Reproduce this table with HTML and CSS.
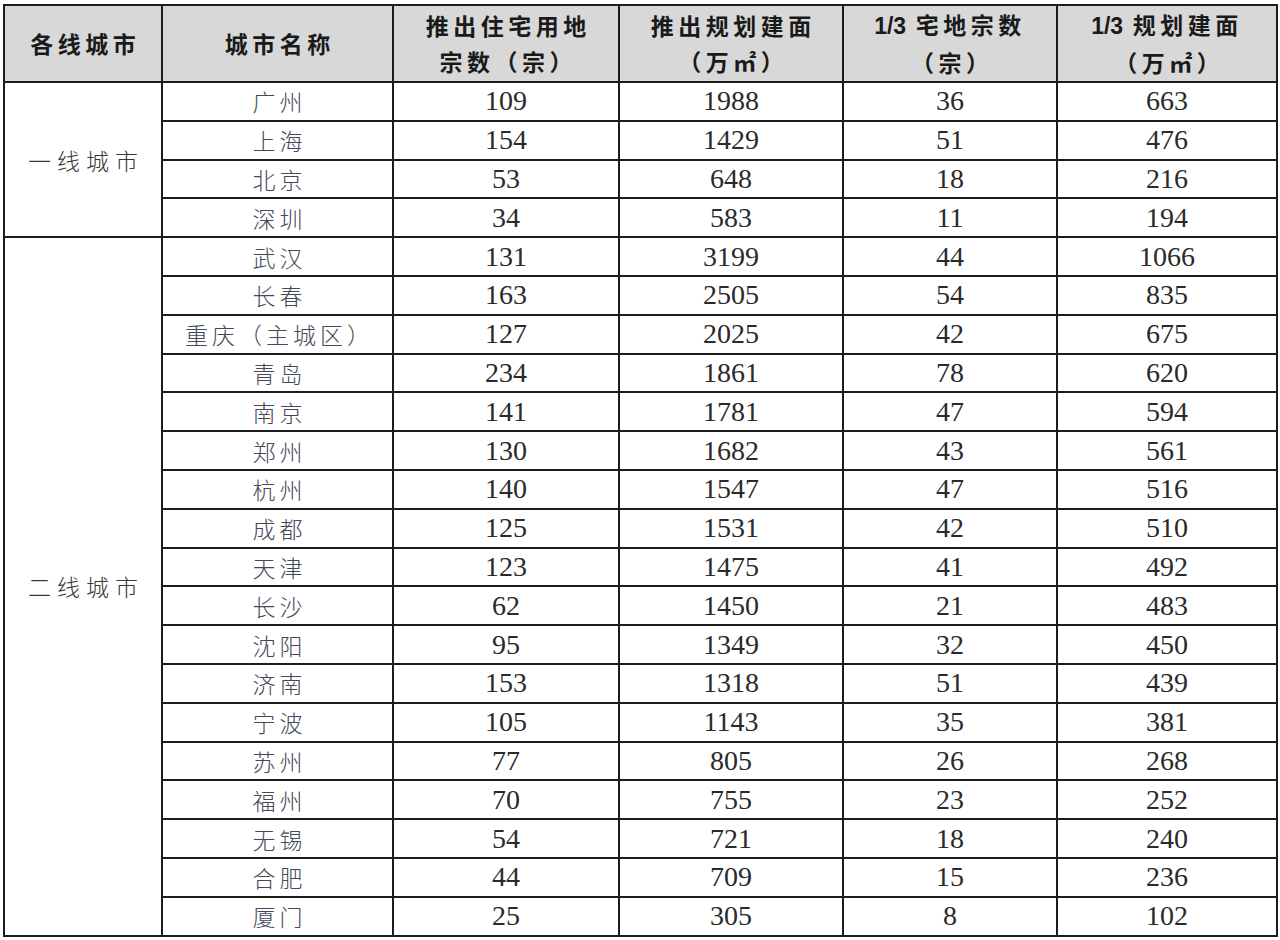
FILE: index.html
```html
<!DOCTYPE html>
<html lang="zh-CN">
<head>
<meta charset="utf-8">
<title>城市宅地推出统计</title>
<link rel="stylesheet" href="styles.css">
</head>
<body>
<table class="land">
<colgroup>
<col class="c1"><col class="c2"><col class="c3"><col class="c4"><col class="c5"><col class="c6">
</colgroup>
<thead>
<tr class="head">
<th><span class="hz">各线城市</span></th>
<th><span class="hz">城市名称</span></th>
<th><span class="hz">推出住宅用地</span><br><span class="hz">宗数（宗）</span></th>
<th><span class="hz">推出规划建面</span><br><span class="hz">（万㎡）</span></th>
<th><span class="num13">1/3</span> <span class="hz">宅地宗数</span><br><span class="hz">（宗）</span></th>
<th><span class="num13">1/3</span> <span class="hz">规划建面</span><br><span class="hz">（万㎡）</span></th>
</tr>
</thead>
<tbody>
<tr><td class="tier" rowspan="4">一线城市</td><td class="city">广州</td><td>109</td><td>1988</td><td>36</td><td>663</td></tr>
<tr><td class="city">上海</td><td>154</td><td>1429</td><td>51</td><td>476</td></tr>
<tr><td class="city">北京</td><td>53</td><td>648</td><td>18</td><td>216</td></tr>
<tr><td class="city">深圳</td><td>34</td><td>583</td><td>11</td><td>194</td></tr>
<tr><td class="tier" rowspan="18">二线城市</td><td class="city">武汉</td><td>131</td><td>3199</td><td>44</td><td>1066</td></tr>
<tr><td class="city">长春</td><td>163</td><td>2505</td><td>54</td><td>835</td></tr>
<tr><td class="city">重庆（主城区）</td><td>127</td><td>2025</td><td>42</td><td>675</td></tr>
<tr><td class="city">青岛</td><td>234</td><td>1861</td><td>78</td><td>620</td></tr>
<tr><td class="city">南京</td><td>141</td><td>1781</td><td>47</td><td>594</td></tr>
<tr><td class="city">郑州</td><td>130</td><td>1682</td><td>43</td><td>561</td></tr>
<tr><td class="city">杭州</td><td>140</td><td>1547</td><td>47</td><td>516</td></tr>
<tr><td class="city">成都</td><td>125</td><td>1531</td><td>42</td><td>510</td></tr>
<tr><td class="city">天津</td><td>123</td><td>1475</td><td>41</td><td>492</td></tr>
<tr><td class="city">长沙</td><td>62</td><td>1450</td><td>21</td><td>483</td></tr>
<tr><td class="city">沈阳</td><td>95</td><td>1349</td><td>32</td><td>450</td></tr>
<tr><td class="city">济南</td><td>153</td><td>1318</td><td>51</td><td>439</td></tr>
<tr><td class="city">宁波</td><td>105</td><td>1143</td><td>35</td><td>381</td></tr>
<tr><td class="city">苏州</td><td>77</td><td>805</td><td>26</td><td>268</td></tr>
<tr><td class="city">福州</td><td>70</td><td>755</td><td>23</td><td>252</td></tr>
<tr><td class="city">无锡</td><td>54</td><td>721</td><td>18</td><td>240</td></tr>
<tr><td class="city">合肥</td><td>44</td><td>709</td><td>15</td><td>236</td></tr>
<tr><td class="city">厦门</td><td>25</td><td>305</td><td>8</td><td>102</td></tr>
</tbody>
</table>
</body>
</html>
```

FILE: styles.css
```css
html, body {
  margin: 0;
  padding: 0;
  background: #ffffff;
}

body {
  padding: 4px 0 0 3px;
  font-family: "Liberation Serif", "Noto Sans CJK SC", serif;
  color: #1e1e1e;
}

.land {
  border-collapse: collapse;
  table-layout: fixed;
  width: 1273px;
  border: 2px solid #1c1c1c;
}

.c1 { width: 158px; }
.c2 { width: 231px; }
.c3 { width: 226px; }
.c4 { width: 224px; }
.c5 { width: 214px; }
.c6 { width: 220px; }

.land th,
.land td {
  border: 2px solid #1c1c1c;
  padding: 0;
  text-align: center;
  vertical-align: middle;
}

.head {
  height: 75px;
}

.land th {
  background: #d8d8d8;
  font-family: "Noto Sans CJK SC", sans-serif;
  font-weight: 700;
  font-size: 23px;
  line-height: 36px;
  padding-bottom: 1px;
  color: #1a1a1a;
}

.hz {
  letter-spacing: 4.5px;
  padding-left: 4.5px;
}

.num13 {
  font-family: "Liberation Sans", Arial, sans-serif;
  font-weight: 700;
  font-size: 23px;
}

.land tbody tr {
  height: 38.8px;
}

.land td {
  font-family: "Liberation Serif", serif;
  font-size: 28px;
  line-height: 30px;
  color: #2a2a2a;
}

.land td.city,
.land td.tier {
  font-family: "Noto Sans CJK SC", sans-serif;
  font-weight: 300;
  font-size: 23px;
  letter-spacing: 4px;
  padding-left: 4px;
  color: #454857;
}

.land td.tier {
  letter-spacing: 6px;
  padding-left: 6px;
  color: #383838;
}
```
